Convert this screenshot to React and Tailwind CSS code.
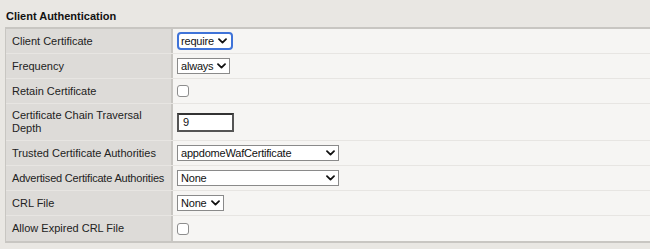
import React from "react";

const Chevron = () => (
  <svg width="9" height="6" viewBox="0 0 9 6" className="shrink-0">
    <path d="M1 1.2 L4.5 4.6 L8 1.2" fill="none" stroke="#111" strokeWidth="1.8" strokeLinecap="round" strokeLinejoin="round" />
  </svg>
);

const Select = ({ value, w, focused }) => (
  <div
    className={
      "flex items-center justify-between gap-[4px] bg-white text-[11px] text-[#111] leading-none " +
      (focused
        ? "h-[18px] border-2 border-[#3f73d8] rounded-[4px] pl-[2px] pr-[4px]"
        : "h-[16px] border border-[#8a8a8a] pl-[3px] pr-[3px]")
    }
    style={w ? { width: w } : undefined}
  >
    <span className="tracking-[-0.2px]">{value}</span>
    <Chevron />
  </div>
);

const Checkbox = () => (
  <div className="w-[12px] h-[12px] bg-white border border-[#8d8d8d] rounded-[3px]" />
);

const rows = [
  { label: "Client Certificate", h: "h-[25px]", el: <Select value="require" focused /> },
  { label: "Frequency", h: "h-[25px]", el: <Select value="always" /> },
  { label: "Retain Certificate", h: "h-[25px]", el: <Checkbox /> },
  {
    label: "Certificate Chain Traversal Depth",
    h: "h-[37px]",
    el: (
      <div className="w-[57px] h-[19px] bg-white border-2 border-[#555] border-t-[#333] flex items-center pl-[4px] text-[11px] text-[#111]">
        9
      </div>
    ),
  },
  { label: "Trusted Certificate Authorities", h: "h-[25px]", el: <Select value="appdomeWafCertificate" w={162} /> },
  { label: "Advertised Certificate Authorities", h: "h-[25px]", el: <Select value="None" w={162} />, tight: true },
  { label: "CRL File", h: "h-[25px]", el: <Select value="None" /> },
  { label: "Allow Expired CRL File", h: "h-[25px]", el: <Checkbox /> },
];

export default function App() {
  return (
    <div
      className="w-[650px] h-[249px] bg-[#e9e7e3] overflow-hidden pt-[10px]"
      style={{ fontFamily: '"Liberation Sans", Arial, sans-serif' }}
    >
      <div className="pl-[6px] h-[17px] text-[11px] font-bold text-[#111] leading-[13px]">Client Authentication</div>
      <div className="ml-[5px] w-[660px] border-t-2 border-b-2 border-l border-[#c8c6c2]">
        {rows.map((r, i) => (
          <div
            key={i}
            className={
              "flex " + r.h + (i < rows.length - 1 ? " border-b border-[#e7e5e2]" : "")
            }
          >
            <div
              className={
                "w-[165px] shrink-0 bg-[#dddbd8] flex items-center pl-[6px] text-[11px] leading-[13px] text-[#222] " +
                (r.tight ? "whitespace-nowrap tracking-[-0.2px] pr-0" : "pr-[2px]")
              }
            >
              {r.label}
            </div>
            <div className="w-[2px] shrink-0 bg-[#c8c6c2]" />
            <div className="flex-1 bg-[#f6f5f3] flex items-center pl-[4px]">{r.el}</div>
          </div>
        ))}
      </div>
    </div>
  );
}
